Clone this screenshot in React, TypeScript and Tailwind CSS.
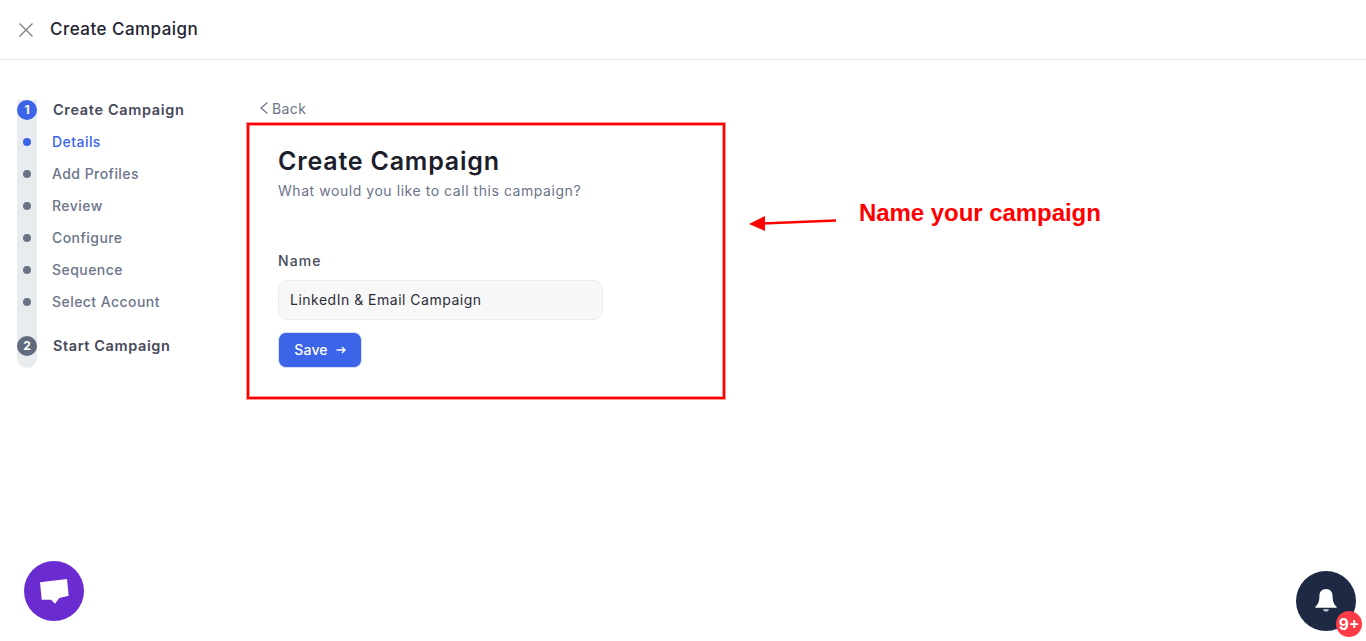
import React from "react";

function Step({ children, active }: { children: string; active?: boolean }) {
  return (
    <div className={`flex h-8 items-center pb-[2px] text-[14px] font-medium tracking-[0.45px] ${active ? "text-[#3b64e8]" : "text-[#6b7488]"}`}>
      {children}
    </div>
  );
}

function Dot({ active }: { active?: boolean }) {
  return (
    <div className="flex h-8 items-center justify-center">
      <span className={`h-2 w-2 rounded-full ${active ? "bg-[#3b64e8]" : "bg-[#6b7488]"}`} />
    </div>
  );
}

export default function App() {
  const steps = ["Add Profiles", "Review", "Configure", "Sequence", "Select Account"];
  return (
    <div className="h-[641px] overflow-hidden bg-white font-['Inter',sans-serif]">
      <header className="flex h-[60px] items-center gap-[16px] border-b border-[#e8e8e8] pl-[18px]">
        <svg width="16" height="16" viewBox="0 0 16 16" fill="none" stroke="#7d7d7d" strokeWidth="1.3">
          <path d="M1.5 1.5 14.5 14.5M14.5 1.5 1.5 14.5" />
        </svg>
        <h1 className="text-[17px] font-medium tracking-[0.47px] text-[#23242f]">Create Campaign</h1>
      </header>

      <div className="flex pt-[40px] pl-[17px]">
        <nav className="flex w-[230px] gap-[15px]">
          <div className="flex h-[268px] w-5 flex-col rounded-b-full bg-[#e9ecef]">
            <span className="flex h-5 w-5 items-center justify-center rounded-full bg-[#3b64e8] text-[12px] font-bold text-white">1</span>
            <div className="mt-[6px]">
              <Dot active />
              {steps.map((s) => <Dot key={s} />)}
            </div>
            <span className="mt-[18px] flex h-5 w-5 items-center justify-center rounded-full bg-[#626a7d] text-[12px] font-bold text-white">2</span>
          </div>
          <div className="flex flex-col">
            <div className="flex h-5 items-center pl-px text-[14.5px] font-semibold tracking-[0.65px] text-[#474a5a]">Create Campaign</div>
            <div className="mt-[6px]">
              <Step active>Details</Step>
              {steps.map((s) => <Step key={s}>{s}</Step>)}
            </div>
            <div className="mt-[18px] flex h-5 items-center pl-px text-[14.5px] font-semibold tracking-[0.6px] text-[#474a5a]">Start Campaign</div>
          </div>
        </nav>

        <main className="flex flex-col">
          <a className="ml-[13px] flex h-[16px] items-center gap-[2px] text-[14px] tracking-[0.4px] text-[#6b7488]">
            <svg className="-ml-px" width="11" height="14" viewBox="0 0 11 14" fill="none" stroke="#6b7488" strokeWidth="1.2">
              <path d="M8.500 1.500 2 7l6.500 5.500" />
            </svg>
            Back
          </a>
          <div className="flex items-start">
            <section className="mt-[7px] h-[276px] w-[478px] border-2 border-[#ff0000] pt-[20px] pl-[29px] shadow-[0_0_0_1px_#ff9a9a,inset_0_0_0_1px_#ff9a9a]">
              <h2 className="text-[25px] leading-[32px] font-semibold tracking-[0.8px] text-[#1d1e2c]">Create Campaign</h2>
              <p className="mt-[4px] text-[14px] leading-[20px] tracking-[0.55px] text-[#6b7488]">What would you like to call this campaign?</p>
              <label className="mt-[50px] block text-[14px] leading-[20px] font-medium tracking-[1.1px] text-[#474a5a]">Name</label>
              <div className="mt-[9px] flex h-[40px] w-[325px] items-center rounded-[10px] border border-[#ebebeb] bg-[#f8f8f8] pb-px pl-[11px] text-[14px] tracking-[0.5px] text-[#2b2d38]">
                LinkedIn &amp; Email Campaign
              </div>
              <button className="mt-[12px] flex h-[36px] w-[84px] items-center justify-center gap-[8px] rounded-[8px] border border-[#d5dcf5] bg-[#3b64e8] pb-px text-[14px] font-medium tracking-[0.2px] text-white">
                Save
                <svg width="10" height="10" viewBox="0 0 10 10" fill="none" stroke="white" strokeWidth="1.3">
                  <path d="M.5 5h8.500M6 2l3 3-3 3" />
                </svg>
              </button>
            </section>
            <svg className="mt-[97px] ml-[23px]" width="89" height="20" viewBox="0 0 89 20">
              <path d="M88 7.500 14 10.500" stroke="#ff0000" strokeWidth="2.400" fill="none" />
              <path d="M1 11 17 3 17 18Z" fill="#ff0000" />
            </svg>
            <p className="mt-[82px] ml-[22px] font-['Liberation_Sans',sans-serif] text-[24px] leading-[30px] font-bold tracking-[-0.05px] text-[#ff0000]">Name your campaign</p>
          </div>
        </main>
      </div>

      <button className="fixed top-[561px] left-[24px] flex h-[60px] w-[60px] items-center justify-center rounded-full bg-[#6a2bd0]">
        <svg width="29" height="25" viewBox="0 0 29 25" fill="white">
          <path d="M0 3.300 27 0 28.700 16.700 19.300 19 15 24.700 11 20.700 1.700 20.700Z" />
        </svg>
      </button>
      <button className="fixed top-[571px] left-[1296px] flex h-[60px] w-[60px] items-center justify-center rounded-full bg-[#1e2a44]">
        <svg width="24" height="26" viewBox="0 0 24 26" fill="white">
          <path d="M12 1c4.200 0 6.600 3 6.600 7.200 0 5.500 1.400 8 3.900 10.300.5.500.2 1.300-.5 1.300H2c-.7 0-1-.8-.5-1.300 2.500-2.300 3.900-4.800 3.900-10.300C5.400 4 7.800 1 12 1Z" />
          <path d="M9 21.200h6c-.4 1.500-1.500 2.300-3 2.300s-2.600-.8-3-2.300Z" fill="#c9ccd3" />
        </svg>
      </button>
      <span className="fixed top-[611px] left-[1336px] flex h-[26px] w-[26px] items-center justify-center rounded-full bg-[#ff3b45] text-[16px] font-bold text-white">9+</span>
    </div>
  );
}
